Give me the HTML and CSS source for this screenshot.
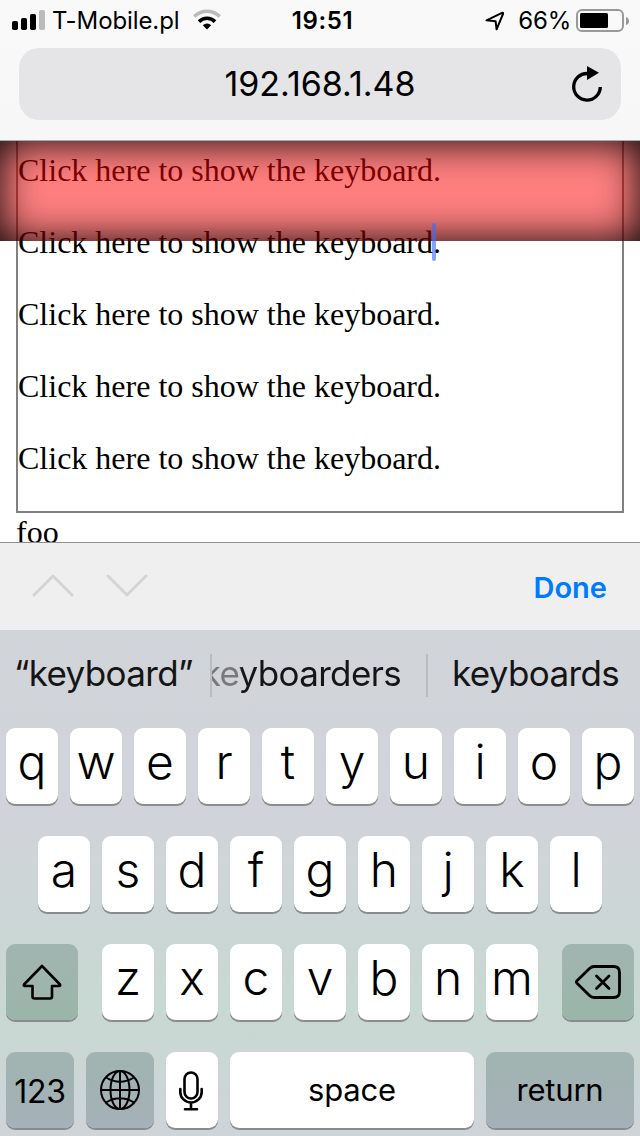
FILE: index.html
```
<!DOCTYPE html>
<html lang="en">
<head>
<meta charset="utf-8">
<title>192.168.1.48</title>
<link rel="stylesheet" href="styles.css">
</head>
<body>
<div class="phone">
  <header class="chrome">
    <div class="status">
      <div class="status-left">
        <svg class="signal" width="34" height="20" viewBox="0 0 34 20"><rect x="0" y="11" width="6" height="9" rx="1.8"/><rect x="9" y="8" width="6" height="12" rx="1.8"/><rect x="18" y="4" width="6" height="16" rx="1.8"/><rect x="27" y="0" width="6" height="20" rx="1.8" fill="#bbb"/></svg>
        <span class="carrier">T-Mobile.pl</span>
        <svg class="wifi" width="28" height="21" viewBox="0 0 28 21"><g fill="none" stroke-width="3.6"><path d="M1.3 7.5a18 18 0 0 1 25.4 0" stroke="#bbb"/><path d="M6 12.6a11.4 11.4 0 0 1 16 0" stroke="#000"/></g><path d="M14 20.5l-4.2-4.3a6.2 6.2 0 0 1 8.4 0z"/></svg>
      </div>
      <time class="clock">19:51</time>
      <div class="status-right">
        <svg class="location" width="20" height="20" viewBox="0 0 20 20"><path d="M1.500 9.300L17 1.800Q18.500 1.300 18 3L11.600 18.300 10.600 10.300z" fill="none" stroke="#000" stroke-width="2" stroke-linejoin="round"/></svg>
        <span class="percent">66%</span>
        <svg class="battery" width="54" height="24" viewBox="0 0 54 24"><rect x="1" y="1" width="46" height="21" rx="5" fill="none" stroke="#999" stroke-width="2"/><rect x="4" y="4" width="28" height="15" rx="1.500"/><path d="M50 8q3 1 3 4t-3 4z" fill="#999"/></svg>
      </div>
    </div>
    <div class="address">
      <span class="url">192.168.1.48</span>
      <svg class="reload" width="32" height="36" viewBox="0 0 32 36"><path d="M16.500 7.500A13.300 13.300 0 1 0 29.300 21" fill="none" stroke="#000" stroke-width="3.300"/><path d="M16 0l12 6.800L16 14z"/></svg>
    </div>
  </header>

  <main class="page">
    <div class="editor">
      <p>Click here to show the keyboard.</p>
      <p>Click here to show the keyboard<span class="caret-spot"><i class="caret"></i></span>.</p>
      <p>Click here to show the keyboard.</p>
      <p>Click here to show the keyboard.</p>
      <p>Click here to show the keyboard.</p>
    </div>
    <div class="foo">foo</div>
    <div class="banner"></div>
  </main>

  <div class="accessory">
    <svg width="116" height="26" viewBox="0 0 116 26" fill="none" stroke="#d4d4d4" stroke-width="3" stroke-linecap="round" stroke-linejoin="round"><path d="M2 22L21 3l19 19M76 3l19 19 19-19"/></svg>
    <span class="done">Done</span>
  </div>

  <section class="keyboard">
    <div class="suggestions">
      <span class="suggestion first">“keyboard”</span>
      <span class="suggestion middle"><span class="faded">keyboarders</span></span>
      <span class="suggestion last">keyboards</span>
    </div>
    <div class="row">
      <div class="key">q</div><div class="key">w</div><div class="key">e</div><div class="key">r</div><div class="key">t</div><div class="key">y</div><div class="key">u</div><div class="key">i</div><div class="key">o</div><div class="key">p</div>
    </div>
    <div class="row">
      <div class="key">a</div><div class="key">s</div><div class="key">d</div><div class="key">f</div><div class="key">g</div><div class="key">h</div><div class="key">j</div><div class="key">k</div><div class="key">l</div>
    </div>
    <div class="row">
      <div class="key special shift"><svg width="40" height="36" viewBox="0 0 40 36"><path d="M20 2L38 20.500Q38.800 22 37 22H30V32.500Q30 34.500 28 34.500H12.500Q10.500 34.500 10.500 32.500V22H3Q1.200 22 2 20.500Z" fill="none" stroke="#000" stroke-width="2.600" stroke-linejoin="round"/></svg></div>
      <div class="key">z</div><div class="key">x</div><div class="key">c</div><div class="key">v</div><div class="key">b</div><div class="key">n</div><div class="key">m</div>
      <div class="key special delete"><svg width="46" height="34" viewBox="0 0 46 34" fill="none" stroke="#000" stroke-width="2.800" stroke-linecap="round" stroke-linejoin="round"><path d="M19 1.500H38.500Q44.500 1.500 44.500 7.500V26.500Q44.500 32.500 38.500 32.500H19Q16.500 32.500 14.500 30.500L2 18.300Q.8 17 2 15.700L14.500 3.500Q16.500 1.500 19 1.500Z"/><path d="M21.500 11l12.500 12.500M34 11L21.500 23.500"/></svg></div>
    </div>
    <div class="row">
      <div class="key cool digits">123</div>
      <div class="key cool glyph"><svg width="40" height="40" viewBox="0 0 40 40" fill="none" stroke="#000" stroke-width="2"><circle cx="20" cy="20" r="19"/><ellipse cx="20" cy="20" rx="9.500" ry="19"/><path d="M20 1v38M1 20h38M6 7.500q14 8.500 28 0M6 32.500q14-8.500 28 0"/></svg></div>
      <div class="key glyph mic"><svg width="26" height="40" viewBox="0 0 26 40" fill="none" stroke="#000" stroke-width="2.600" stroke-linecap="round"><rect x="6.500" y="1.500" width="13" height="26" rx="6.500"/><path d="M2.300 18v3a10.700 10.500 0 0 0 21.400 0v-3M13 32v6M7 38.300h12"/></svg></div>
      <div class="key space">space</div>
      <div class="key cool return">return</div>
    </div>
  </section>
</div>
</body>
</html>
```
FILE: styles.css
```
* { box-sizing: border-box; }
body { margin: 0; background: #fff; color: #000; font-family: Inter, "Liberation Sans", sans-serif; }
svg { display: block; flex: none; }
.phone { width: 640px; height: 1136px; display: flex; flex-direction: column; overflow: hidden; }

.chrome { height: 141px; flex: none; background: linear-gradient(#f9f9f9, #f7f7f7); border-bottom: 1px solid #a5b0ad; }
.status { height: 48px; display: grid; grid-template-columns: 1fr auto 1fr; align-items: start; padding: 0 10px 0 12px; }
.status-left, .status-right { display: flex; align-items: flex-start; }
.status-right { justify-content: flex-end; }
.signal { margin-top: 10px; }
.carrier { margin: 6px 0 0 6px; width: 129px; font-size: 24px; line-height: 29px; letter-spacing: -.1px; white-space: nowrap; }
.wifi { margin: 9px 0 0 12px; }
.clock { margin: 6px 0 0 3px; font-size: 24px; line-height: 29px; font-weight: 600; letter-spacing: .6px; }
.location { margin: 11px 13px 0 0; }
.percent { margin: 6px 5px 0 0; font-size: 24px; line-height: 29px; letter-spacing: -.2px; white-space: nowrap; }
.battery { margin: 9px 0 0; }
.address { height: 72px; margin: 0 19px; display: flex; align-items: center; justify-content: center; position: relative; border-radius: 20px; background: #e5e5e7; }
.url { font-size: 34px; line-height: 42px; }
.reload { position: absolute; right: 18px; top: 18px; }

.page { height: 401px; flex: none; position: relative; overflow: hidden; font: 32px/36px "Liberation Serif", "Times New Roman", serif; }
.editor { width: 608px; height: 372px; margin: 0 16px; padding-top: 11px; border: 2px solid #808080; border-top: 0; }
.editor p { margin: 0 0 36px; }
.foo { margin: 1px 0 0 16px; }
.caret-spot { position: relative; }
.caret { position: absolute; left: -1px; top: -1px; width: 4px; height: 38px; border-radius: 2px; background: rgba(66, 107, 242, .63); z-index: 2; }
.banner { position: absolute; inset: 0 0 auto; height: 100px; background: rgba(255, 0, 0, .5); box-shadow: inset 0 0 40px #000; }

.accessory { height: 88px; flex: none; display: flex; align-items: center; justify-content: space-between; padding: 0 33px 2px 32px; background: #efefef; border-top: 1px solid #8e8e93; }
.done { margin-top: 4px; font-size: 29px; font-weight: 600; color: #007aff; }

.keyboard { flex: 1; display: flex; flex-direction: column; background: linear-gradient(#d1d4d9 0, #d0d3d9 190px, #ccd6d6 280px, #c8d8d2 370px, #c9d7d3 410px, #cfd4d9 506px); }
.suggestions { height: 98px; flex: none; display: flex; color: #151515; font-size: 35px; line-height: 44px; letter-spacing: -.65px; padding-top: 24px; }
.suggestion { height: 43px; line-height: 38px; white-space: nowrap; }
.first { width: 210px; padding-left: 14px; }
.middle { width: 218px; display: flex; justify-content: flex-end; overflow: hidden; padding-right: 25px; border: solid #b9bcc1; border-width: 0 2px; }
.faded { color: transparent; background: linear-gradient(90deg, #77797c 36px, #151515 40px) text; }
.middle .faded { background-size: 100% 100%; }
.last { padding-left: 24px; }
.row { display: flex; justify-content: center; gap: 12px; height: 76px; margin-bottom: 32px; flex: none; }
.key { width: 52px; height: 76px; flex: none; display: flex; align-items: center; justify-content: center; padding-bottom: 9px; border-radius: 9px; background: #fff; box-shadow: 0 2px 0 #898c8e; font-size: 48px; font-weight: 300; }
.special { width: 72px; padding-bottom: 0; background: linear-gradient(#a1b5b0, #9bb5aa); }
.shift { margin-right: 12px; }
.delete { margin-left: 12px; }
.cool { width: 68px; background: linear-gradient(#a0b4b0, #a5b0b8); }
.glyph { padding-bottom: 0; }
.mic { padding: 1px 2px 0 0; }
.digits, .space, .return { font-size: 31px; font-weight: 400; letter-spacing: -.2px; padding-bottom: 2px; }
.digits { font-size: 32px; padding-bottom: 0; padding-top: 3px; }
.space { width: 244px; }
.return { width: 148px; }
```
